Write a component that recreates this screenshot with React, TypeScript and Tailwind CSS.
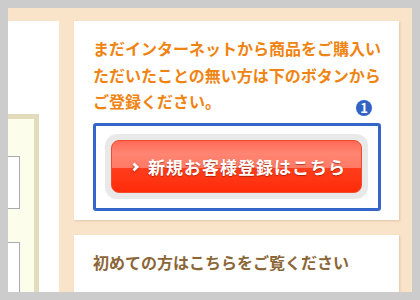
export default function App() {
  return (
    <div className="w-[420px] h-[300px] bg-[#cccccc] p-2 font-['Noto_Sans_CJK_JP','Noto_Sans',sans-serif]">
      <div className="h-full flex gap-[15px] pt-[13px] bg-[#f9e3c9] overflow-hidden">
        {/* 左側のパネル（切れて見えている部分） */}
        <div className="w-[51px] shrink-0 bg-white flex justify-end pt-[93px] pr-[20px] overflow-hidden">
          <div className="w-[200px] h-[400px] shrink-0 border-[5px] border-[#e3dcbc] bg-[#fdfdeb] flex flex-col items-end pt-[37px] pr-[14px] gap-[33px]">
            <div className="w-[150px] h-[53px] shrink-0 bg-white border border-[#a9a9b3]" />
            <div className="w-[150px] h-[53px] shrink-0 bg-white border border-[#a9a9b3]" />
          </div>
        </div>

        {/* 右側のカード */}
        <div className="w-[325px] shrink-0 flex flex-col gap-[15px]">
          <div className="h-[199px] shrink-0 bg-white shadow-[1px_1px_2px_rgba(150,110,60,0.25)] pt-[14px] pl-[19px]">
            <p className="text-[16px] leading-[26.5px] font-bold text-[#ef8412] whitespace-nowrap">
              まだインターネットから商品をご購入い
              <br />
              ただいたことの無い方は下のボタンから
              <br />
              ご登録ください。
            </p>
            <div className="relative mt-[8px] w-[288px] h-[88px] border-[3px] border-[#3466c9] rounded-[3px] flex items-center justify-center">
              <span className="absolute -top-[26px] right-[6px] w-[16px] h-[16px] rounded-full bg-[#3163c4] text-white text-[13px] leading-[16px] font-bold text-center">
                1
              </span>
              <div className="w-[263px] h-[65px] rounded-[12px] bg-[#e9e9e9] p-[6px] -ml-[1px]">
                <button className="w-full h-full rounded-[8px] border border-[#f24a2c] bg-[linear-gradient(to_bottom,#ff6a56_0%,#ff8572_25%,#ff7a66_52%,#ff3d1d_53%,#ff2c08_100%)] flex items-center pl-[20px] gap-[9px] text-white text-[17px] font-bold tracking-[1px] [text-shadow:0_1px_1px_rgba(120,20,0,0.6)]">
                  <svg width="7" height="10" viewBox="0 0 7 10" className="drop-shadow-[0_1px_1px_rgba(120,20,0,0.6)]">
                    <polyline points="1.5,1.5 5,5 1.5,8.5" fill="none" stroke="white" strokeWidth="2.8" />
                  </svg>
                  新規お客様登録はこちら
                </button>
              </div>
            </div>
          </div>

          <div className="h-[100px] shrink-0 bg-white shadow-[1px_1px_2px_rgba(150,110,60,0.25)] pt-[14px] pl-[19px]">
            <p className="text-[16px] leading-[26px] font-bold text-[#8b6637] whitespace-nowrap">
              初めての方はこちらをご覧ください
            </p>
          </div>
        </div>
      </div>
    </div>
  );
}
